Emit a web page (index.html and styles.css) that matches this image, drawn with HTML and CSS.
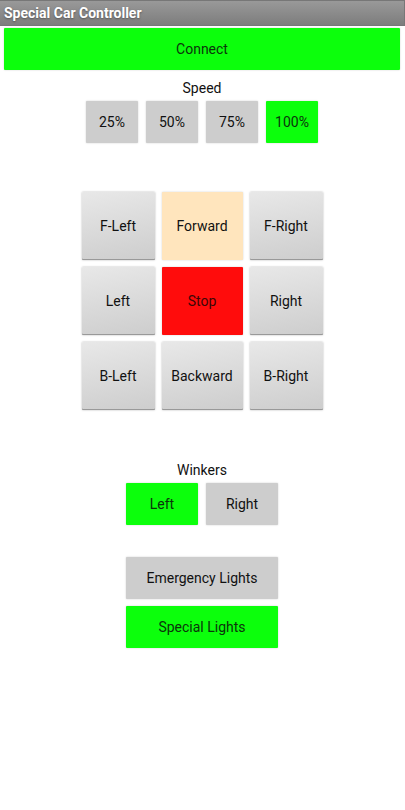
FILE: index.html
```html
<!DOCTYPE html>
<html lang="en">
<head>
<meta charset="utf-8">
<meta name="viewport" content="width=device-width, initial-scale=1">
<title>Special Car Controller</title>
<link rel="stylesheet" href="styles.css">
</head>
<body>
<header class="titlebar"><h1>Special Car Controller</h1></header>
<main class="screen">
  <button type="button" class="btn on connect">Connect</button>
  <section class="group speed" aria-labelledby="speed-label">
    <h2 class="label" id="speed-label">Speed</h2>
    <div class="row">
      <button type="button" class="btn">25%</button>
      <button type="button" class="btn">50%</button>
      <button type="button" class="btn">75%</button>
      <button type="button" class="btn on">100%</button>
    </div>
  </section>
  <section class="pad" aria-label="Direction">
    <button type="button" class="btn raised">F-Left</button>
    <button type="button" class="btn forward">Forward</button>
    <button type="button" class="btn raised">F-Right</button>
    <button type="button" class="btn raised">Left</button>
    <button type="button" class="btn stop">Stop</button>
    <button type="button" class="btn raised">Right</button>
    <button type="button" class="btn raised">B-Left</button>
    <button type="button" class="btn raised">Backward</button>
    <button type="button" class="btn raised">B-Right</button>
  </section>
  <section class="group winkers" aria-labelledby="winkers-label">
    <h2 class="label" id="winkers-label">Winkers</h2>
    <div class="row">
      <button type="button" class="btn on">Left</button>
      <button type="button" class="btn">Right</button>
    </div>
  </section>
  <section class="lights" aria-label="Lights">
    <button type="button" class="btn">Emergency Lights</button>
    <button type="button" class="btn on">Special Lights</button>
  </section>
</main>
</body>
</html>
```
FILE: styles.css
```css
* {
  box-sizing: border-box;
}

body {
  margin: 0;
  background: #fff;
  color: #111;
  font-family: Roboto, "Liberation Sans", sans-serif;
  font-size: 14px;
  line-height: 20px;
}

.titlebar {
  padding: 3px 4px;
  background: linear-gradient(#999, #7d7d7d);
  border-top: 1px solid #777;
  border-right: 1px solid #777;
  border-bottom: 1px solid #777;
}

.titlebar h1 {
  margin: 0;
  color: #fff;
  font-size: 14px;
  font-weight: 700;
  line-height: 18px;
  text-shadow: 0 1px 2px #555;
}

.screen {
  display: flex;
  flex-direction: column;
  align-items: center;
  padding: 2px 5px 2px 4px;
}

.btn {
  min-height: 42px;
  padding: 0;
  border: 0;
  border-radius: 1px;
  background: #cdcdcd;
  color: #111;
  font: inherit;
  box-shadow: 0 0 2px rgba(0, 0, 0, 0.2);
}

.on {
  background: #0cff0c;
  color: #0b340b;
}

.connect {
  align-self: stretch;
}

.label {
  margin: 0;
  font-size: 14px;
  font-weight: 400;
  text-align: center;
}

.group {
  display: flex;
  flex-direction: column;
  gap: 3px;
}

.row {
  display: grid;
  grid-auto-flow: column;
  gap: 8px;
}

.speed {
  margin-top: 8px;
}

.speed .row {
  grid-auto-columns: 52px;
}

.pad {
  display: grid;
  grid-template-columns: 73px 81px 73px;
  grid-auto-rows: 68px;
  gap: 7px;
  margin-top: 49px;
}

.pad .raised {
  background: linear-gradient(170deg, #e8e8e8, #cdcdcd);
  box-shadow: inset 0 -1px #999, 0 0 2px #aaa;
}

.forward {
  background: #ffe5bd;
}

.stop {
  background: #ff0c0c;
  color: #3c0707;
}

.winkers {
  margin-top: 50px;
}

.winkers .row {
  grid-auto-columns: 72px;
}

.lights {
  display: grid;
  grid-template-columns: 152px;
  gap: 7px;
  margin-top: 32px;
}
```
